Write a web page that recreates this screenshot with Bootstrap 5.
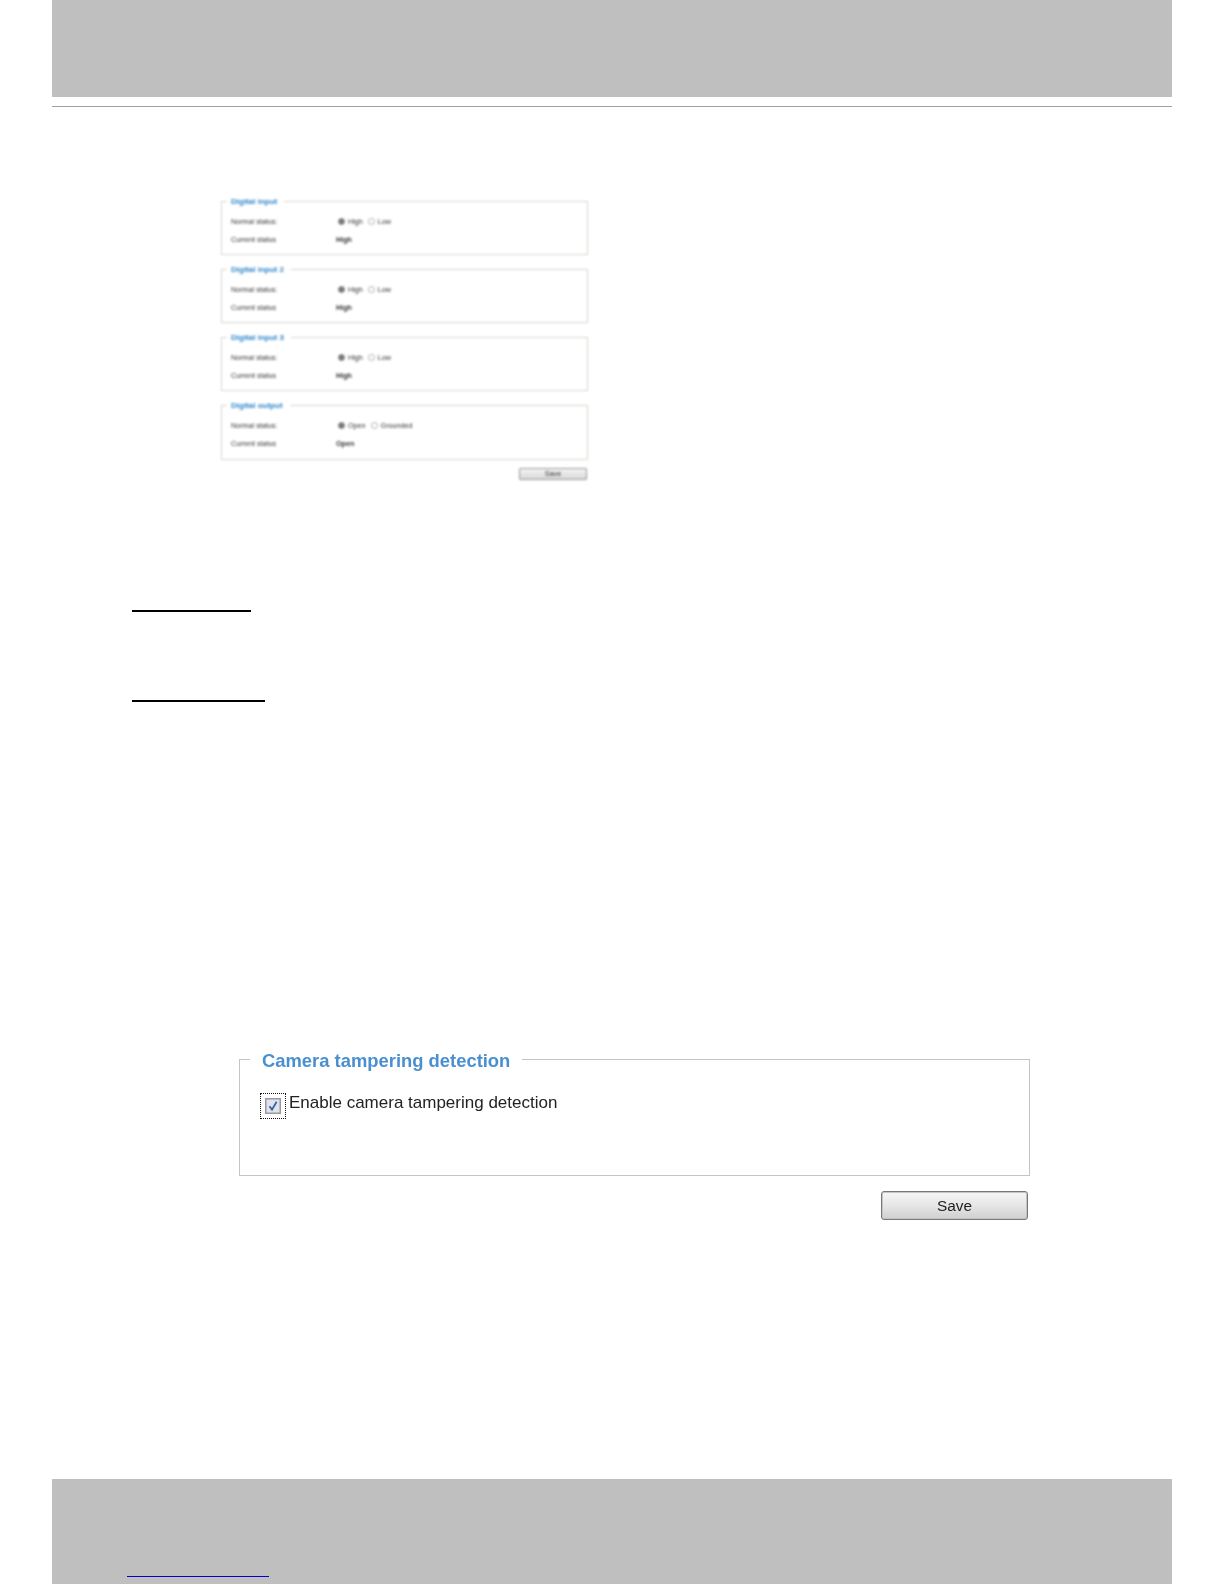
<!DOCTYPE html>
<html lang="en">
<head>
<meta charset="utf-8">
<title>Digital input and tampering detection</title>
<link href="https://cdn.jsdelivr.net/npm/bootstrap@5.3.0/dist/css/bootstrap.min.css" rel="stylesheet">
<style>
html, body { height: 100%; }
body { background: #fff; font-family: "Liberation Sans", Arial, sans-serif; color: #222; }
.sheet { height: 1584px; padding: 0 52px; overflow: hidden; }
.band { background: #bfbfbf; }
.band-top { height: 97px; }
.top-rule { height: 1px; margin-top: 9px; background: #a0a0a0; }
.figure-small { width: 367px; margin: 88px 0 0 169px; filter: blur(.9px); }
.fs-small { height: 60px; margin: 0 0 8px; padding: 6px 9px 0; border: 1px solid #d6d6d2; min-width: 0; }
.fs-small-last { height: 61px; }
.fs-small legend { float: none; width: auto; margin: 0 0 0 -4px; padding: 2px 7px 0 4px; font-size: 8px; line-height: 10px; font-weight: 700; color: #2f86c9; }
.fs-small .status-row { height: 18px; font-size: 7.2px; line-height: 18px; color: #333; }
.status-label { width: 105px; }
.status-value { font-weight: 700; }
.dot { display: inline-block; width: 7px; height: 7px; border-radius: 50%; border: 1px solid #aaa; background: #fff; margin: 0 3px 0 2px; vertical-align: -1px; }
.dot-off { margin-left: 3px; }
.dot-on { background: #777; border-color: #888; }
.btn-small-save { width: 68px; height: 12px; margin: 0 1px 0 0; padding: 0; font-size: 7.2px; line-height: 10px; color: #333; border: 1px solid #999; border-radius: 1px; background: linear-gradient(#f4f4f4, #d8d8d8); }
.rule-a, .rule-b { height: 2px; background: #000; margin-left: 80px; }
.rule-a { width: 119px; margin-top: 130px; }
.rule-b { width: 133px; margin-top: 88px; }
.figure-large { width: 791px; margin: 343px 0 0 187px; filter: blur(.3px); }
.fs-large { height: 131px; margin: 0; padding: 0 19px; border: 1px solid #c4c4c0; min-width: 0; }
.fs-large legend { float: none; width: auto; margin: 0 0 0 -9px; padding: 4px 12px 0; font-size: 18.4px; line-height: 24px; font-weight: 700; color: #4a90d0; }
.check-row { margin-top: 20px; font-size: 17px; line-height: 24px; color: #222; }
.check-focus { width: 26px; height: 26px; margin-left: 1px; border: 1px dotted #111; flex: none; padding: 4px; }
.check-focus svg { display: block; }
.check-text { margin: -2px 0 0 3px; }
.btn-large-save { width: 147px; height: 29px; margin: 15px 2px 0 0; padding: 0; font-size: 15.4px; line-height: 26px; color: #222; border: 1px solid #777; border-radius: 3px; box-shadow: inset 0 0 0 1px #c4c4c4; background: linear-gradient(#f6f6f6, #e6e6e6 50%, #cfcfcf); }
.band-bottom { height: 106px; margin-top: 259px; padding: 97px 0 0 75px; }
.link-stub { width: 142px; height: 1px; background: #0000d0; }
</style>
</head>
<body>
<div class="sheet">
  <div class="band band-top"></div>
  <div class="top-rule"></div>

  <div class="figure-small">
    <fieldset class="fs-small">
      <legend>Digital input</legend>
      <div class="status-row d-flex"><span class="status-label">Normal status:</span><span><span class="dot dot-on"></span>High <span class="dot dot-off"></span>Low</span></div>
      <div class="status-row d-flex"><span class="status-label">Current status</span><span class="status-value">High</span></div>
    </fieldset>
    <fieldset class="fs-small">
      <legend>Digital input 2</legend>
      <div class="status-row d-flex"><span class="status-label">Normal status:</span><span><span class="dot dot-on"></span>High <span class="dot dot-off"></span>Low</span></div>
      <div class="status-row d-flex"><span class="status-label">Current status</span><span class="status-value">High</span></div>
    </fieldset>
    <fieldset class="fs-small">
      <legend>Digital input 3</legend>
      <div class="status-row d-flex"><span class="status-label">Normal status:</span><span><span class="dot dot-on"></span>High <span class="dot dot-off"></span>Low</span></div>
      <div class="status-row d-flex"><span class="status-label">Current status</span><span class="status-value">High</span></div>
    </fieldset>
    <fieldset class="fs-small fs-small-last">
      <legend>Digital output</legend>
      <div class="status-row d-flex"><span class="status-label">Normal status:</span><span><span class="dot dot-on"></span>Open <span class="dot dot-off"></span>Grounded</span></div>
      <div class="status-row d-flex"><span class="status-label">Current status</span><span class="status-value">Open</span></div>
    </fieldset>
    <div class="d-flex justify-content-end"><button type="button" class="btn btn-small-save">Save</button></div>
  </div>

  <div class="rule-a"></div>
  <div class="rule-b"></div>

  <div class="figure-large">
    <fieldset class="fs-large">
      <legend>Camera tampering detection</legend>
      <div class="check-row d-flex align-items-start">
        <span class="check-focus">
          <svg width="16" height="16" viewBox="0 0 16 16" aria-hidden="true">
            <rect x=".75" y=".75" width="14.5" height="14.5" fill="#dfe3ec" stroke="#9a9a9a" stroke-width="1.5"/>
            <path d="M4.5 8.2 7 11.6 11.6 3.8" fill="none" stroke="#3f5fa8" stroke-width="1.8"/>
          </svg>
        </span>
        <span class="check-text">Enable camera tampering detection</span>
      </div>
    </fieldset>
    <div class="d-flex justify-content-end"><button type="button" class="btn btn-large-save">Save</button></div>
  </div>

  <div class="band band-bottom"><div class="link-stub"></div></div>
</div>
<script src="https://cdn.jsdelivr.net/npm/bootstrap@5.3.0/dist/js/bootstrap.bundle.min.js"></script>
</body>
</html>
